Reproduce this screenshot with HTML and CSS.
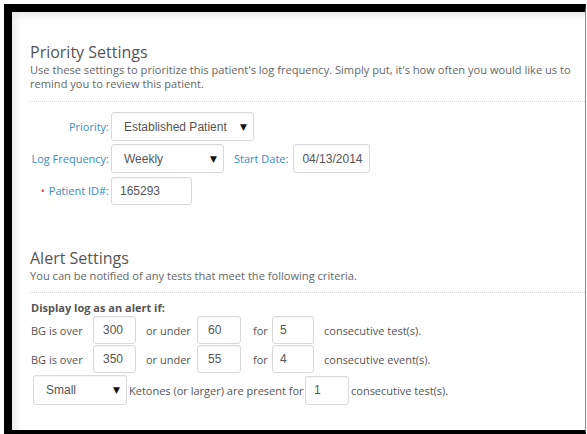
FILE: index.html
```html
<!DOCTYPE html>
<html lang="en">
<head>
<meta charset="utf-8">
<title>Patient Settings</title>
<link rel="stylesheet" href="styles.css">
</head>
<body>
<div class="screen">
  <section class="section">
    <h2 class="section-title">Priority Settings</h2>
    <p class="lead">Use these settings to prioritize this patient's log frequency. Simply put, it's how often you would like us to<br>remind you to review this patient.</p>
  </section>

  <div class="form-grid">
    <span class="field-label">Priority:</span>
    <div class="control">
      <span class="select select-priority">Established Patient<i class="caret">&#9660;</i></span>
    </div>

    <span class="field-label">Log Frequency:</span>
    <div class="control">
      <span class="select select-freq">Weekly<i class="caret">&#9660;</i></span>
      <span class="field-label inline-label">Start Date:</span>
      <input class="text-input date-input" type="text" value="04/13/2014">
    </div>

    <span class="field-label"><b class="required">&#8226;</b> Patient ID#:</span>
    <div class="control">
      <input class="text-input id-input" type="text" value="165293">
    </div>
  </div>

  <section class="section section-alert">
    <h2 class="section-title">Alert Settings</h2>
    <p class="lead">You can be notified of any tests that meet the following criteria.</p>
  </section>

  <div class="alerts">
    <p class="alerts-heading">Display log as an alert if:</p>
    <div class="bg-row">
      <span class="cell-text">BG is over</span>
      <input class="text-input num-a" type="text" value="300">
      <span class="cell-text pad-under">or under</span>
      <input class="text-input num-b" type="text" value="60">
      <span class="cell-text pad-for">for</span>
      <input class="text-input num-c" type="text" value="5">
      <span class="cell-text pad-tail">consecutive test(s).</span>
    </div>
    <div class="bg-row">
      <span class="cell-text">BG is over</span>
      <input class="text-input num-a" type="text" value="350">
      <span class="cell-text pad-under">or under</span>
      <input class="text-input num-b" type="text" value="55">
      <span class="cell-text pad-for">for</span>
      <input class="text-input num-c" type="text" value="4">
      <span class="cell-text pad-tail">consecutive event(s).</span>
    </div>
    <div class="ketone-row">
      <span class="select select-ketone">Small<i class="caret">&#9660;</i></span>
      <span class="cell-text ketone-text">Ketones (or larger) are present for</span>
      <input class="text-input num-k" type="text" value="1">
      <span class="cell-text ketone-tail">consecutive test(s).</span>
    </div>
  </div>
</div>
</body>
</html>
```

FILE: styles.css
```css
html, body {
  margin: 0;
  padding: 0;
  background: #fff;
}

body {
  font-family: "Open Sans", "DejaVu Sans", sans-serif;
  color: #666;
}

/* window frame */
.screen {
  box-sizing: border-box;
  margin: 4px 0 0 4px;
  width: 582px;
  height: 430px;
  border-top: 8px solid #000;
  border-left: 8px solid #000;
  border-right: 1px solid #8c8c8c;
  border-bottom: 4px solid #000;
  padding: 0 0 0 18px;
  box-shadow: inset 7px 7px 9px -4px rgba(0, 0, 0, 0.1);
  overflow: hidden;
}

/* section headers */
.section {
  padding-top: 30px;
  padding-bottom: 10px;
  border-bottom: 1px dotted #d6d6d6;
}

.section-alert {
  margin-top: 43px;
  padding-top: 0;
  padding-bottom: 9px;
}

.section-title {
  margin: 0;
  font-size: 16px;
  font-weight: 400;
  line-height: 20px;
  color: #555;
}

.lead {
  margin: 1px 0 0;
  font-size: 11.1px;
  line-height: 14px;
  color: #666;
  white-space: nowrap;
}

/* priority form */
.form-grid {
  display: grid;
  grid-template-columns: 79px auto;
  grid-auto-rows: 29px;
  column-gap: 2px;
  row-gap: 3px;
  margin-top: 10px;
}

.field-label {
  display: flex;
  align-items: center;
  justify-content: flex-end;
  font-size: 11px;
  color: #3a8cc2;
  white-space: nowrap;
}

.required {
  font-weight: 400;
  color: #e23b3b;
  margin-right: 4px;
}

.control {
  display: flex;
  align-items: center;
}

.inline-label {
  margin-left: 10px;
  margin-right: 5px;
  height: 100%;
}

.select {
  position: relative;
  box-sizing: border-box;
  display: flex;
  align-items: center;
  height: 29px;
  padding-left: 12px;
  border: 1px solid #d9d9d9;
  border-radius: 3px;
  background: #fff;
  font-family: "Liberation Sans", Arial, sans-serif;
  font-size: 12px;
  color: #555;
  box-shadow: inset 0 1px 1px rgba(0, 0, 0, 0.04);
}

/* the drop-down arrow sits over the right end of the box */
.caret {
  position: absolute;
  top: 50%;
  right: 6px;
  transform: translateY(-50%);
  font-family: "DejaVu Sans", sans-serif;
  font-style: normal;
  font-size: 9px;
  color: #111;
}

.select-priority { width: 143px; }
.select-freq { width: 113px; }

.text-input {
  box-sizing: border-box;
  height: 29px;
  margin: 0;
  padding: 0 0 0 8px;
  border: 1px solid #d9d9d9;
  border-radius: 3px;
  background: #fff;
  font-family: "Liberation Sans", Arial, sans-serif;
  font-size: 12px;
  color: #555;
  box-shadow: inset 0 1px 1px rgba(0, 0, 0, 0.04);
  outline: none;
}

.date-input { width: 77px; }
.id-input { width: 81px; height: 28px; }

/* alert rules */
.alerts {
  margin-top: 8px;
  padding-left: 1px;
}

.alerts-heading {
  margin: 0 0 2px;
  font-size: 11px;
  line-height: 13px;
  font-weight: 700;
  color: #555;
}

.bg-row {
  display: grid;
  grid-template-columns: 62px 43px 61px 44px 31px 42px auto;
  height: 28px;
  margin-bottom: 1px;
}

.cell-text {
  display: flex;
  align-items: center;
  font-size: 11px;
  color: #555;
  white-space: nowrap;
}

.bg-row .text-input {
  height: 28px;
  width: 100%;
}

.num-a { padding-left: 9px; }
.num-b { padding-left: 10px; }
.num-c { padding-left: 7px; }

.pad-under { padding-left: 10px; }
.pad-for { padding-left: 12px; }
.pad-tail { padding-left: 10px; }

.ketone-row {
  display: flex;
  align-items: center;
  height: 30px;
  margin-top: 2px;
  padding-left: 2px;
}

.select-ketone {
  width: 94px;
  height: 30px;
}

.ketone-text {
  margin-left: 2px;
  width: 176px;
}

.num-k {
  width: 44px;
  height: 29px;
  padding-left: 8px;
}

.ketone-tail {
  margin-left: 2px;
}
```
